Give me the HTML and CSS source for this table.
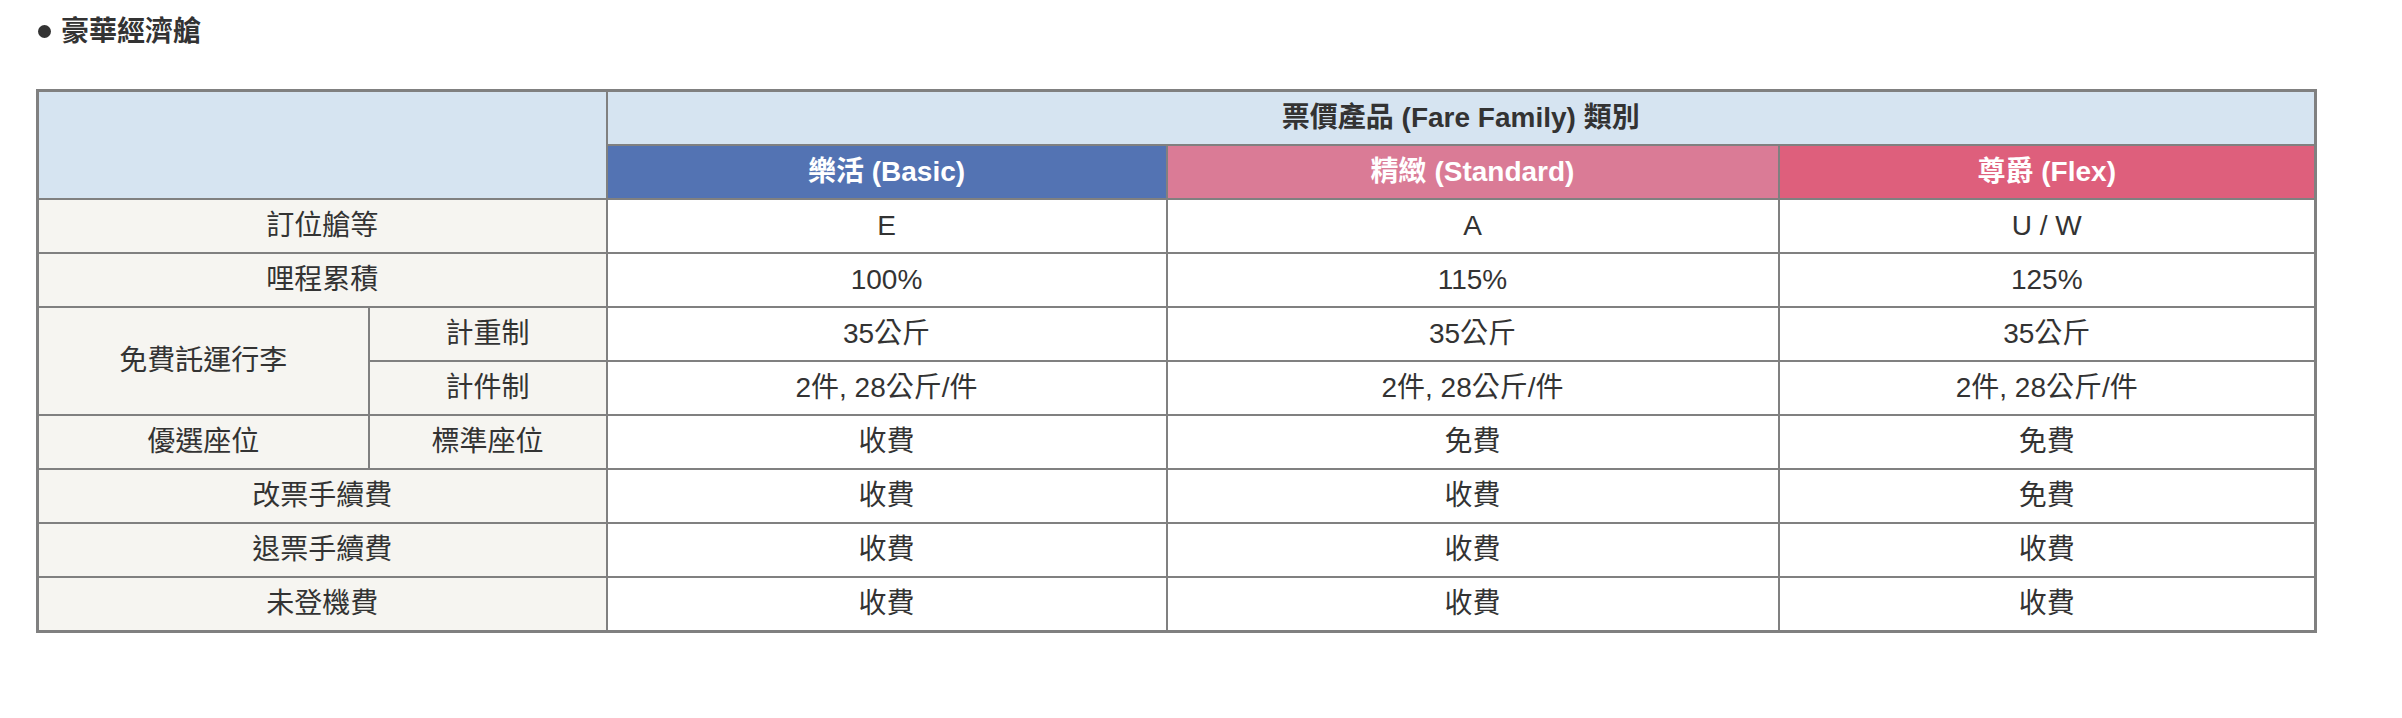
FILE: index.html
```html
<!DOCTYPE html>
<html lang="zh-Hant">
<head>
<meta charset="utf-8">
<title>豪華經濟艙</title>
<link rel="stylesheet" href="styles.css">
</head>
<body>
<div class="page">
  <h2 class="section-title"><span class="bullet"></span>豪華經濟艙</h2>
  <table class="fare-table">
    <colgroup>
      <col class="c-label1">
      <col class="c-label2">
      <col class="c-basic">
      <col class="c-standard">
      <col class="c-flex">
    </colgroup>
    <thead>
      <tr>
        <th class="head-blank" rowspan="2" colspan="2"></th>
        <th class="head-family" colspan="3">票價產品 (Fare Family) 類別</th>
      </tr>
      <tr>
        <th class="head-basic">樂活 (Basic)</th>
        <th class="head-standard">精緻 (Standard)</th>
        <th class="head-flex">尊爵 (Flex)</th>
      </tr>
    </thead>
    <tbody>
      <tr>
        <td class="label" colspan="2">訂位艙等</td>
        <td>E</td><td>A</td><td>U / W</td>
      </tr>
      <tr>
        <td class="label" colspan="2">哩程累積</td>
        <td>100%</td><td>115%</td><td>125%</td>
      </tr>
      <tr>
        <td class="label" rowspan="2">免費託運行李</td>
        <td class="label">計重制</td>
        <td>35公斤</td><td>35公斤</td><td>35公斤</td>
      </tr>
      <tr>
        <td class="label">計件制</td>
        <td>2件, 28公斤/件</td><td>2件, 28公斤/件</td><td>2件, 28公斤/件</td>
      </tr>
      <tr>
        <td class="label">優選座位</td>
        <td class="label">標準座位</td>
        <td>收費</td><td>免費</td><td>免費</td>
      </tr>
      <tr>
        <td class="label" colspan="2">改票手續費</td>
        <td>收費</td><td>收費</td><td>免費</td>
      </tr>
      <tr>
        <td class="label" colspan="2">退票手續費</td>
        <td>收費</td><td>收費</td><td>收費</td>
      </tr>
      <tr>
        <td class="label" colspan="2">未登機費</td>
        <td>收費</td><td>收費</td><td>收費</td>
      </tr>
    </tbody>
  </table>
</div>
</body>
</html>
```
FILE: styles.css
```css
html, body {
  margin: 0;
  padding: 0;
  background: #ffffff;
}

body {
  font-family: "Liberation Sans", "Noto Sans CJK TC", sans-serif;
  color: #333333;
}

.page {
  padding: 18px 0 0 36px;
}

.section-title {
  display: flex;
  align-items: center;
  gap: 10px;
  margin: 0 0 44px 2px;
  font-size: 28px;
  line-height: 27px;
  font-weight: 700;
  color: #333333;
}

.bullet {
  width: 13px;
  height: 13px;
  border-radius: 50%;
  background: #333333;
}

.fare-table {
  border-collapse: collapse;
  table-layout: fixed;
  width: 2278px;
  border: 3px solid #808080;
  font-size: 28px;
}

.c-label1 { width: 331px; }
.c-label2 { width: 238px; }
.c-basic { width: 560px; }
.c-standard { width: 612px; }
.c-flex { width: 537px; }

.fare-table th,
.fare-table td {
  border: 2px solid #808080;
  height: 52px;
  padding: 0;
  text-align: center;
  vertical-align: middle;
  line-height: 1.3;
}

.fare-table td {
  background: #ffffff;
  font-weight: 400;
  color: #333333;
}

.fare-table td.label {
  background: #f6f5f1;
}

.head-blank,
.head-family {
  background: #d6e4f1;
  color: #333333;
  font-weight: 700;
}

.head-basic,
.head-standard,
.head-flex {
  color: #ffffff;
  font-weight: 700;
}

.head-basic { background: #5373b3; }
.head-standard { background: #da7b96; }
.head-flex { background: #de5f7c; }
```
